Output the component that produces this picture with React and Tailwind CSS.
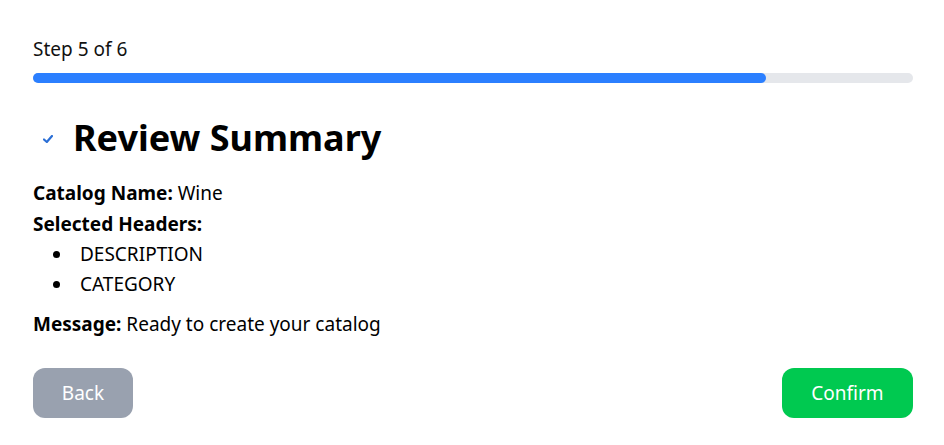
export default function App() {
  return (
    <div className="w-[944px] h-[445px] bg-white pl-[33px] pr-[31px] pt-[35px] text-black" style={{ fontFamily: '"Noto Sans", "Open Sans", sans-serif' }}>
      <div className="text-[19px] leading-7 text-[#111]">Step 5 of 6</div>
      <div className="mt-[10px] h-2.5 w-full rounded-full bg-[#e5e7eb]">
        <div className="h-2.5 rounded-full bg-[#2b7fff]" style={{ width: `${(5 / 6) * 100}%` }} />
      </div>
      <div className="mt-[35px] flex items-center">
        <div className="w-10 flex items-center pl-[10px] pt-[2px]">
          <svg width="10" height="8" viewBox="0 0 10 8">
            <path d="M1 4.5 L3.8 7 L9 1" fill="none" stroke="#2b6fd6" strokeWidth="2.2" strokeLinecap="round" strokeLinejoin="round" />
          </svg>
        </div>
        <h1 className="text-4xl font-bold leading-10">Review Summary</h1>
      </div>
      <div className="mt-[20px] text-[19px]">
        <p className="leading-[31px]"><span className="font-bold">Catalog Name:</span> Wine</p>
        <p className="leading-[30px] font-bold">Selected Headers:</p>
        <ul className="pl-5">
          {["DESCRIPTION", "CATEGORY"].map((t) => (
            <li key={t} className="flex items-center leading-[30px]">
              <span className="mr-[20px] h-[7px] w-[7px] rounded-full bg-black" />
              <span>{t}</span>
            </li>
          ))}
        </ul>
        <p className="mt-[10px] leading-[30px]"><span className="font-bold">Message:</span> Ready to create your catalog</p>
      </div>
      <div className="mt-[29px] flex justify-between">
        <button className="h-[50px] w-[100px] rounded-xl bg-[#99a1af] text-[19px] text-white">Back</button>
        <button className="h-[50px] w-[131px] rounded-xl bg-[#00c950] text-[19px] text-white">Confirm</button>
      </div>
    </div>
  );
}
